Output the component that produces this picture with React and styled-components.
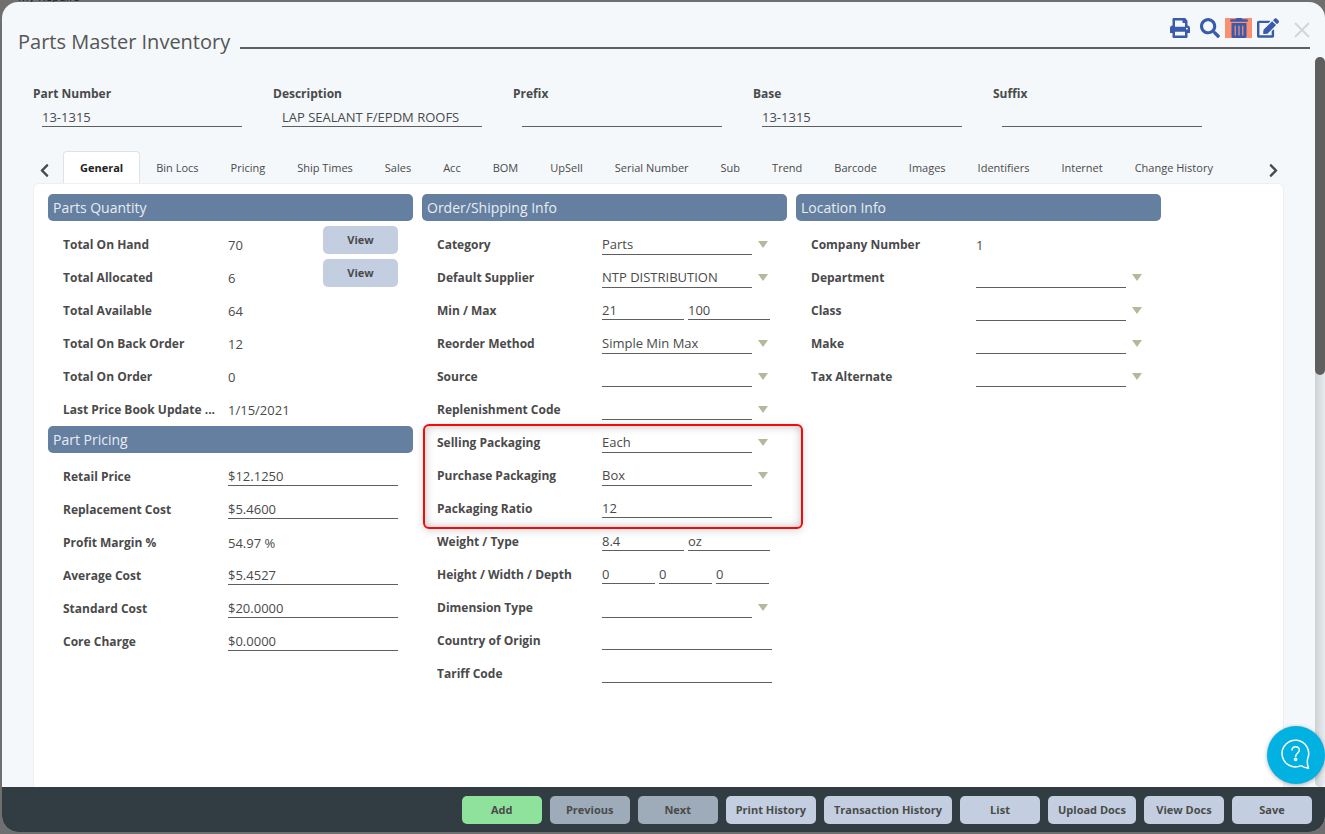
import React from 'react'
import styled, { createGlobalStyle } from 'styled-components'
import { FaPrint, FaSearch, FaTrashAlt, FaEdit, FaChevronLeft, FaChevronRight } from 'react-icons/fa'

const GlobalStyle = createGlobalStyle`
	* {
		box-sizing: border-box;
	}

	body {
		margin: 0;
		background-color: #6f6f6f;
		color: #4a4a4a;
		font-family: 'Open Sans', sans-serif;
	}

	button,
	input,
	select {
		font-family: inherit;
		color: inherit;
	}
`

const Page = styled.div`
	position: relative;
	display: flex;
	min-height: 100vh;
	padding: 2px 0 2px 2px;
`

const Behind = styled.div`
	position: absolute;
	top: -12px;
	left: 18px;
	font-size: 12px;
	line-height: 18px;
	color: #222222;
`

const Modal = styled.main`
	position: relative;
	flex: 1;
	min-width: 0;
	display: flex;
	flex-direction: column;
	border-radius: 16px;
	background-color: #f4f8fb;
	overflow: hidden;
`

const Header = styled.header`
	display: flex;
	height: 47px;
	margin: 0 15px 8px 16px;
`

const Title = styled.h1`
	margin: 0;
	padding: 26px 10px 0 0;
	font-size: 20px;
	line-height: 28px;
	font-weight: 400;
	white-space: nowrap;
	color: #555555;
`

const Tools = styled.div`
	flex: 1;
	display: flex;
	justify-content: flex-end;
	align-items: flex-start;
	padding-top: 16px;
	border-bottom: 2px solid #5f5f5f;
`

const ToolButton = styled.button`
	display: flex;
	justify-content: center;
	align-items: center;
	width: ${({ $width }) => $width || '20px'};
	height: 20px;
	margin-right: ${({ $gap }) => $gap || '5px'};
	padding: 0;
	border: none;
	font-size: ${({ $size }) => $size || '20px'};
	color: #3a5aac;
	background-color: ${({ $danger }) => ($danger ? '#fb8f6f' : 'transparent')};
`

const CloseButton = styled.button`
	display: flex;
	margin-top: 4px;
	padding: 0;
	border: none;
	background: transparent;
`

const Content = styled.div`
	flex: 1;
	display: flex;
`

const Body = styled.div`
	flex: 1;
	min-width: 0;
	display: flex;
	flex-direction: column;
	padding: 28px 31px 0 31px;
`

const Track = styled.div`
	width: 10px;
	border-radius: 5px;
	background: linear-gradient(to right, #cfd2d4, #e9ecee);
`

const Thumb = styled.div`
	height: 318px;
	border-radius: 5px;
	background-color: #5f5f5f;
`

const Summary = styled.div`
	display: grid;
	grid-template-columns: repeat(5, 240px);
`

const SummaryField = styled.label`
	display: flex;
	flex-direction: column;
	font-size: 12px;
	line-height: 18px;
	font-weight: 700;

	input {
		margin: 5px 0 0 9px;
	}
`

const Input = styled.input`
	width: ${({ $width }) => $width || '170px'};
	height: 19px;
	padding: 0 0 1px;
	border: none;
	border-bottom: 1px solid #5f5f5f;
	border-radius: 0;
	background: transparent;
	font-size: 13px;
	font-weight: 400;
	outline: none;
`

const TabBar = styled.nav`
	display: flex;
	align-items: flex-end;
	margin-top: 24px;
`

const Scroll = styled.button`
	display: flex;
	align-items: center;
	justify-content: center;
	width: 22px;
	height: 26px;
	padding: 0;
	border: none;
	background: transparent;
	font-size: 15px;
`

const Tabs = styled.div`
	flex: 1;
	display: flex;
	padding-left: 8px;
`

const Tab = styled.button`
	height: 32px;
	padding: 0 ${({ $active }) => ($active ? '16px' : '15px')};
	border: 1px solid ${({ $active }) => ($active ? '#dfe3e8' : 'transparent')};
	border-bottom: none;
	border-radius: 4px 4px 0 0;
	background-color: ${({ $active }) => ($active ? '#ffffff' : 'transparent')};
	font-size: 11px;
	font-weight: ${({ $active }) => ($active ? 700 : 400)};
	white-space: nowrap;
	color: ${({ $active }) => ($active ? '#222222' : '#4a4a4a')};
`

const Panel = styled.div`
	flex: 1;
	display: grid;
	grid-template-columns: repeat(3, minmax(0, 365px));
	column-gap: 9px;
	align-items: start;
	padding: 10px 14px;
	border: 1px solid #edf0f3;
	border-bottom: none;
	border-radius: 6px 6px 0 0;
	background-color: #ffffff;
`

const SectionTitle = styled.h2`
	margin: 0 0 7px;
	padding: 0 5px;
	border-radius: 5px;
	background-color: #657fa0;
	font-size: 14px;
	line-height: 27px;
	font-weight: 400;
	color: #e8ecf2;
`

const Row = styled.div`
	display: flex;
	align-items: center;
	height: 33px;
	padding: 0 15px;
`

const Label = styled.label`
	width: 165px;
	font-size: 12px;
	font-weight: 700;
	white-space: nowrap;
	overflow: hidden;
	text-overflow: ellipsis;
`

const Value = styled.output`
	flex: 1;
	font-size: 13px;
`

const Fields = styled.div`
	display: flex;
	gap: 4px;
`

const SelectWrap = styled.div`
	display: flex;
	align-items: center;
	gap: 6px;

	&::after {
		content: '';
		border: 5px solid transparent;
		border-top: 7px solid #b5b99a;
		border-bottom: none;
		pointer-events: none;
	}
`

const Select = styled.select`
	appearance: none;
	width: 150px;
	height: 21px;
	padding: 0;
	border: none;
	border-bottom: 1px solid #5f5f5f;
	border-radius: 0;
	background: transparent;
	font-size: 13px;
	outline: none;
`

const Highlight = styled.div`
	position: relative;

	&::after {
		content: '';
		position: absolute;
		inset: -2px -16px -4px 1px;
		border: 2px solid #f50a0a;
		border-radius: 6px;
		box-shadow: inset 0 0 10px rgba(0, 0, 0, 0.25), 0 2px 8px rgba(0, 0, 0, 0.15);
		pointer-events: none;
	}
`

const Button = styled.button`
	min-width: 80px;
	height: 28px;
	padding: 0 10px 2px;
	border: none;
	border-radius: 5px;
	background-color: ${({ $color }) => $color || '#c3cfe0'};
	font-size: 11px;
	font-weight: 700;
	white-space: nowrap;
`

const ViewButton = styled(Button)`
	min-width: 75px;
	margin-bottom: 9px;
`

const Footer = styled.footer`
	display: flex;
	justify-content: flex-end;
	gap: 8px;
	padding: 9px 13px 8px;
	background-color: #323d43;
`

const HelpButton = styled.button`
	position: absolute;
	right: 0;
	bottom: 50px;
	width: 58px;
	height: 58px;
	padding: 0;
	border: none;
	border-radius: 50%;
	background-color: #00b1e2;
	box-shadow: 0 1px 4px rgba(0, 0, 0, 0.3);
`

const summary = [
	['Part Number', '13-1315'],
	['Description', 'LAP SEALANT F/EPDM ROOFS'],
	['Prefix', ''],
	['Base', '13-1315'],
	['Suffix', ''],
]

const tabs = [
	'General', 'Bin Locs', 'Pricing', 'Ship Times', 'Sales', 'Acc', 'BOM', 'UpSell',
	'Serial Number', 'Sub', 'Trend', 'Barcode', 'Images', 'Identifiers', 'Internet', 'Change History',
]

const quantity = [
	{ label: 'Total On Hand', value: '70', view: true },
	{ label: 'Total Allocated', value: '6', view: true },
	{ label: 'Total Available', value: '64' },
	{ label: 'Total On Back Order', value: '12' },
	{ label: 'Total On Order', value: '0' },
	{ label: 'Last Price Book Update ...', value: '1/15/2021' },
]

const pricing = [
	{ label: 'Retail Price', inputs: ['$12.1250'] },
	{ label: 'Replacement Cost', inputs: ['$5.4600'] },
	{ label: 'Profit Margin %', value: '54.97 %' },
	{ label: 'Average Cost', inputs: ['$5.4527'] },
	{ label: 'Standard Cost', inputs: ['$20.0000'] },
	{ label: 'Core Charge', inputs: ['$0.0000'] },
]

const ordering = [
	{ label: 'Category', select: 'Parts' },
	{ label: 'Default Supplier', select: 'NTP DISTRIBUTION' },
	{ label: 'Min / Max', inputs: ['21', '100'] },
	{ label: 'Reorder Method', select: 'Simple Min Max' },
	{ label: 'Source', select: '' },
	{ label: 'Replenishment Code', select: '' },
]

const packaging = [
	{ label: 'Selling Packaging', select: 'Each' },
	{ label: 'Purchase Packaging', select: 'Box' },
	{ label: 'Packaging Ratio', inputs: ['12'] },
]

const shipping = [
	{ label: 'Weight / Type', inputs: ['8.4', 'oz'] },
	{ label: 'Height / Width / Depth', inputs: ['0', '0', '0'] },
	{ label: 'Dimension Type', select: '' },
	{ label: 'Country of Origin', inputs: [''] },
	{ label: 'Tariff Code', inputs: [''] },
]

const location = [
	{ label: 'Company Number', value: '1' },
	{ label: 'Department', select: '' },
	{ label: 'Class', select: '' },
	{ label: 'Make', select: '' },
	{ label: 'Tax Alternate', select: '' },
]

const inputWidths = { 1: '170px', 2: '82px', 3: '53px' }

const actions = [
	['Add', '#8ee29b'],
	['Previous', '#9eabb9'],
	['Next', '#9eabb9'],
	['Print History'],
	['Transaction History'],
	['List'],
	['Upload Docs'],
	['View Docs'],
	['Save'],
]

const Field = ({ label, value, inputs, select, view }) => {
	const id = label.toLowerCase().replace(/[^a-z]+/g, '-')
	return (
		<Row>
			<Label htmlFor={id}>{label}</Label>
			{value !== undefined && <Value id={id}>{value}</Value>}
			{inputs && (
				<Fields>
					{inputs.map((text, i) => (
						<Input
							key={i}
							id={i === 0 ? id : undefined}
							aria-label={i === 0 ? undefined : label}
							$width={inputWidths[inputs.length]}
							defaultValue={text}
						/>
					))}
				</Fields>
			)}
			{select !== undefined && (
				<SelectWrap>
					<Select id={id}>
						<option>{select}</option>
					</Select>
				</SelectWrap>
			)}
			{view && <ViewButton>View</ViewButton>}
		</Row>
	)
}

const FieldList = ({ items }) => items.map((item) => <Field key={item.label} {...item} />)

const App = () => {
	return (
		<>
			<GlobalStyle />
			<Page>
				<Behind>My Repairs</Behind>
				<Modal>
					<Header>
						<Title>Parts Master Inventory</Title>
						<Tools>
							<ToolButton aria-label='Print' $gap='10px'><FaPrint /></ToolButton>
							<ToolButton aria-label='Search'><FaSearch /></ToolButton>
							<ToolButton aria-label='Delete' $width='27px' $danger><FaTrashAlt /></ToolButton>
							<ToolButton aria-label='Edit' $width='22px' $size='22px' $gap='15px'><FaEdit /></ToolButton>
							<CloseButton aria-label='Close'>
								<svg width='16' height='16' viewBox='0 0 16 16' stroke='#d3d5d7' strokeWidth='2'>
									<path d='M1 1l14 14M15 1L1 15' />
								</svg>
							</CloseButton>
						</Tools>
					</Header>
					<Content>
						<Body>
							<Summary>
								{summary.map(([label, text]) => (
									<SummaryField key={label}>
										{label}
										<Input $width='200px' defaultValue={text} />
									</SummaryField>
								))}
							</Summary>
							<TabBar>
								<Scroll aria-label='Previous tabs'><FaChevronLeft /></Scroll>
								<Tabs>
									{tabs.map((tab) => (
										<Tab key={tab} $active={tab === 'General'}>{tab}</Tab>
									))}
								</Tabs>
								<Scroll aria-label='Next tabs'><FaChevronRight /></Scroll>
							</TabBar>
							<Panel>
								<section>
									<SectionTitle>Parts Quantity</SectionTitle>
									<FieldList items={quantity} />
									<SectionTitle>Part Pricing</SectionTitle>
									<FieldList items={pricing} />
								</section>
								<section>
									<SectionTitle>Order/Shipping Info</SectionTitle>
									<FieldList items={ordering} />
									<Highlight>
										<FieldList items={packaging} />
									</Highlight>
									<FieldList items={shipping} />
								</section>
								<section>
									<SectionTitle>Location Info</SectionTitle>
									<FieldList items={location} />
								</section>
							</Panel>
						</Body>
						<Track>
							<Thumb />
						</Track>
					</Content>
					<Footer>
						{actions.map(([label, color]) => (
							<Button key={label} $color={color}>{label}</Button>
						))}
					</Footer>
				</Modal>
				<HelpButton aria-label='Help'>
					<svg width='58' height='58' viewBox='0 0 58 58' fill='none' stroke='#ffffff' strokeWidth='1.5' strokeLinejoin='round'>
						<path d='M34 39.6A13.3 13.3 0 1 1 40.6 32.800C40 36 40.500 39.500 41.500 42.300C39 42 36.500 41.200 34 39.600' />
						<path d='M25 24.500C25 19.500 32.300 19.500 32.300 24C32.300 27 28.600 27 28.600 31' />
						<circle cx='28.600' cy='33.300' r='1.100' />
					</svg>
				</HelpButton>
			</Page>
		</>
	)
}

export default App
